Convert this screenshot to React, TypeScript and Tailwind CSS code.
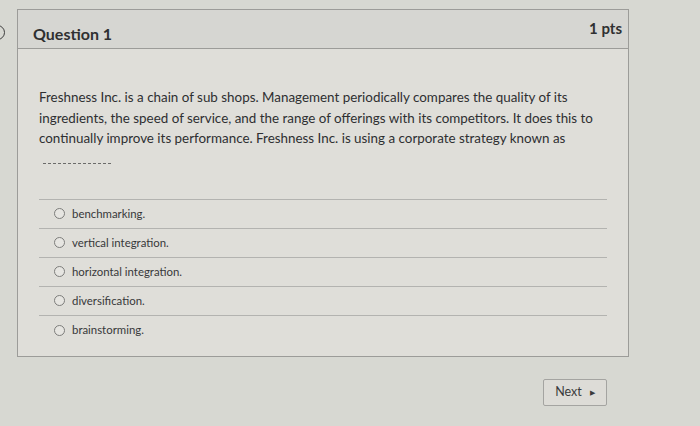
const answers = [
  "benchmarking.",
  "vertical integration.",
  "horizontal integration.",
  "diversification.",
  "brainstorming.",
];

function Radio() {
  return (
    <span className="inline-block h-[11px] w-[11px] shrink-0 rounded-full border border-[#7d7d7b] bg-[#e6e5e1]" />
  );
}

export default function App() {
  return (
    <div
      className="relative h-[426px] w-[700px] overflow-hidden bg-[#d7d8d2] text-[#3a3b3c]"
      style={{ fontFamily: "Lato, 'Open Sans', sans-serif" }}
    >
      {/* cut-off nav circle at the very left */}
      <div className="absolute left-0 top-[25px] h-[16px] w-[6px] overflow-hidden">
        <span className="absolute -left-[10px] top-0 block h-[15px] w-[15px] rounded-full border-[1.5px] border-[#3d3d3d]" />
      </div>

      <div className="ml-[17px] mt-[9px] w-[612px] border border-[#9c9c99] bg-[#dfded9]">
        {/* header */}
        <div className="flex h-[39px] items-center justify-between border-b border-[#9c9c99] bg-[#d6d6d2] pl-[15px] pr-[6px]">
          <span className="pt-[9px] text-[16px] font-bold text-[#2f3031]">Question 1</span>
          <span className="pb-[2px] text-[15px] font-bold text-[#2f3031]">1 pts</span>
        </div>

        {/* body */}
        <div className="px-[21px] pb-[11px] pt-[38px]">
          <p className="text-[13.4px] leading-[20.5px] text-[#2e2f31]">
            Freshness Inc. is a chain of sub shops. Management periodically compares the quality of its
            ingredients, the speed of service, and the range of offerings with its competitors. It does this to
            continually improve its performance. Freshness Inc. is using a corporate strategy known as
          </p>
          <div className="ml-[4px] mt-[14px] w-[68px] border-b border-dashed border-[#6b6b6a]" />

          <div className="mt-[35px] border-t border-[#b3b3b0]">
            {answers.map((a, i) => (
              <div
                key={a}
                className={
                  "flex h-[29px] items-center gap-[7px] pl-[15px] text-[11.4px] text-[#37383a] " +
                  (i < answers.length - 1 ? "border-b border-[#b3b3b0]" : "")
                }
              >
                <Radio />
                <span>{a}</span>
              </div>
            ))}
          </div>
        </div>
      </div>

      {/* footer nav */}
      <div className="ml-[543px] mt-[22px] flex h-[27px] w-[64px] items-center justify-center gap-[8px] rounded-[2px] border border-[#a4a4a1] bg-[#dddcd7] text-[12.5px] text-[#3a3b3c]">
        <span>Next</span>
        <span className="text-[7px]">▶</span>
      </div>
    </div>
  );
}
